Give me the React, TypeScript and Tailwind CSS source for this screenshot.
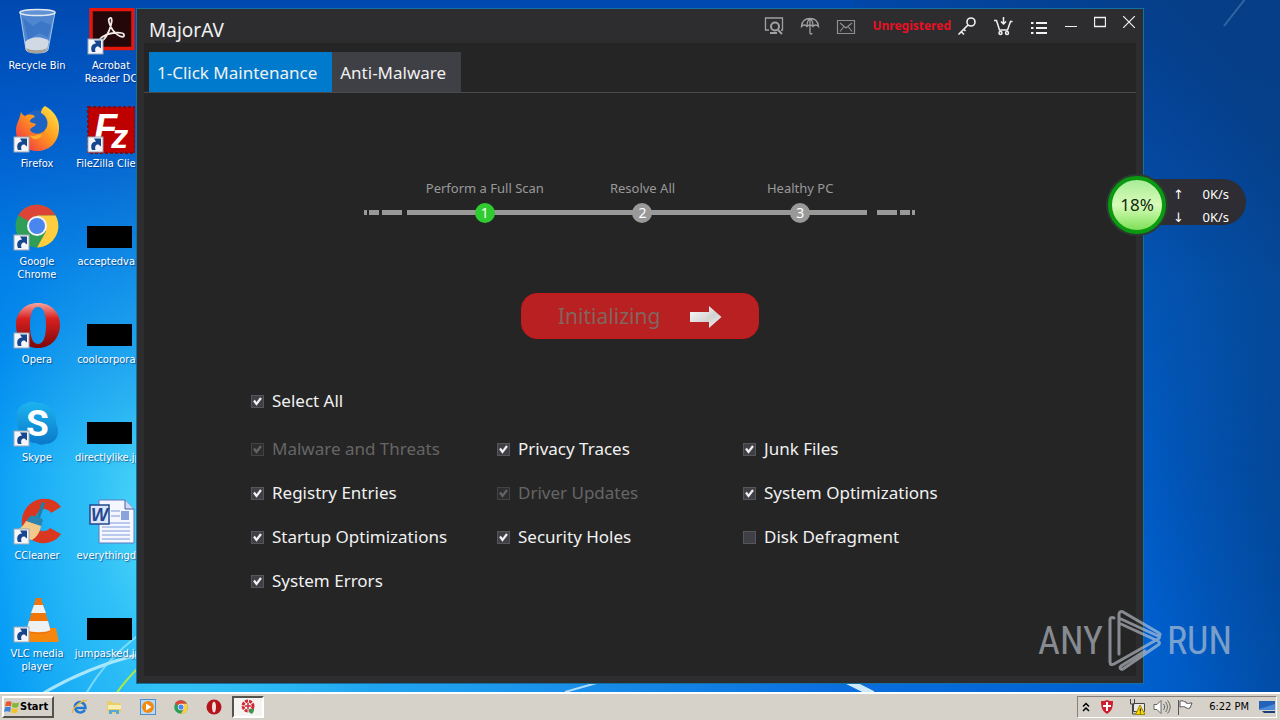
import { useState } from 'react'
import type { ReactNode } from 'react'

function Shortcut() {
  return (
    <g>
      <rect x="1" y="31" width="15" height="15" fill="#f4f6fa" stroke="#9aa7b8" />
      <path d="M5 44c-2-5 0-8 4-8.500l-2-3h7v8l-2.500-2c-3 0-4 2-3 5.500z" fill="#17468f" />
    </g>
  )
}

function RecycleBin() {
  return (
    <svg viewBox="0 0 48 48" className="size-12">
      <path d="M7 4l6 38c1 4 21 4 22 0l7-38z" fill="#8fb7e6" fillOpacity=".55" stroke="#a9c6e8" />
      <path d="M10 10l10 8 8-5 10 4-3 12-9-4-11 7z" fill="#2a66bd" fillOpacity=".5" />
      <path d="M12 34c6-6 17-6 24-1l-2 9c-2 3-19 3-21 0z" fill="#dfe3e6" fillOpacity=".9" />
      <path d="M13 40c5 3 16 3 21 0l-1 3c-3 3-17 3-19 0z" fill="#a7a198" />
      <ellipse cx="24.500" cy="4.500" rx="17.500" ry="3" fill="#5f93d6" stroke="#e1e8ee" strokeWidth="1.500" />
    </svg>
  )
}

function Acrobat() {
  return (
    <svg viewBox="0 0 48 48" className="size-12">
      <rect x="4" y="1.500" width="42" height="39" fill="#240709" stroke="#e5170d" strokeWidth="3.500" />
      <path d="M22 11c2-3 4 0 2 6-2 8-7 16-10 16-4-1 3-7 12-8 7-1 12 0 11 3-2 3-11-3-14-11-1-3-2-5-1-6z" fill="none" stroke="#f3e9e6" strokeWidth="1.800" />
      <Shortcut />
    </svg>
  )
}

function Firefox() {
  return (
    <svg viewBox="0 0 48 48" className="size-12">
      <defs>
        <linearGradient id="fox" x1="1" y1="0" x2="0" y2="1">
          <stop offset="0" stopColor="#fff04a" />
          <stop offset=".45" stopColor="#ff9a1f" />
          <stop offset="1" stopColor="#f0204b" />
        </linearGradient>
      </defs>
      <circle cx="25" cy="20" r="16" fill="#1c63c4" />
      <path d="M8 6c1 2 2 3 4 4 4-2 8-2 10 1-4 1-5 3-5 5l6 2c-1 3-5 3-6 6 3 5 11 5 15 0 5-6 2-14-4-17 0-3 1-5 4-7 9 5 15 13 14 24-1 13-10 21-22 21S3 36 3 25c0-8 3-9 5-19z" fill="url(#fox)" />
      <path d="M16 29c5 3 9-2 13 0-2 5-9 6-13 0z" fill="#ffb02a" />
      <Shortcut />
    </svg>
  )
}

function FileZilla() {
  return (
    <svg viewBox="0 0 48 48" className="size-12">
      <rect x="1" y="1" width="47" height="46" fill="#bf0000" stroke="#7c1016" strokeWidth="2" strokeDasharray="3 2" />
      <text x="7" y="35" fontFamily="Liberation Sans" fontWeight="bold" fontStyle="italic" fontSize="38" fill="#fff">
        F<tspan dx="-6" dy="7" fontSize="34">z</tspan>
      </text>
      <Shortcut />
    </svg>
  )
}

function ChromeLogo({ className }: { className: string }) {
  return (
    <svg viewBox="2 2 44 44" className={className}>
      <circle cx="24" cy="24" r="21.500" fill="#2f9e58" />
      <path d="M24 24L5.400 13.200A21.500 21.500 0 0 1 42.600 13.500H24z" fill="#db4437" />
      <path d="M24 13.500h18.600A21.500 21.500 0 0 1 24 45.500l9-16z" fill="#ffcd40" />
      <circle cx="24" cy="24" r="10" fill="#f4f4f4" />
      <circle cx="24" cy="24" r="8" fill="#4a86ee" />
    </svg>
  )
}

function Chrome() {
  return (
    <div className="relative flex size-12 justify-center">
      <ChromeLogo className="size-11" />
      <svg viewBox="0 0 48 48" className="absolute inset-0"><Shortcut /></svg>
    </div>
  )
}

function Opera() {
  return (
    <svg viewBox="0 0 48 48" className="size-12">
      <defs>
        <linearGradient id="opera" x1="0" y1="0" x2="0" y2="1">
          <stop offset="0" stopColor="#f5a5a0" />
          <stop offset=".35" stopColor="#d9201f" />
          <stop offset="1" stopColor="#7d0709" />
        </linearGradient>
      </defs>
      <path fillRule="evenodd" d="M25 1C12 1 3 10 3 23s9 23 22 23 22-10 22-23S38 1 25 1zm0 4c6 0 8 8 8 18s-2 19-8 19-8-9-8-19 2-18 8-18z" fill="url(#opera)" />
      <Shortcut />
    </svg>
  )
}

function Skype() {
  return (
    <svg viewBox="0 0 48 48" className="size-12">
      <defs>
        <linearGradient id="skype" x1="0" y1="0" x2="0" y2="1">
          <stop offset="0" stopColor="#1cb4f0" />
          <stop offset="1" stopColor="#0a78c8" />
        </linearGradient>
      </defs>
      <path d="M14 3c4-2 8-1 10 0 11-1 20 9 19 21 5 8 1 20-11 20-3 1-6 1-9-1C12 43 4 34 5 23 1 15 5 5 14 3z" fill="url(#skype)" />
      <text x="13" y="36" fontFamily="Roboto" fontWeight="bold" fontSize="37" fill="#fff">S</text>
      <Shortcut />
    </svg>
  )
}

function CCleaner() {
  return (
    <svg viewBox="0 0 48 48" className="size-12">
      <path d="M48 9C42-1 26-2 17 6 6 15 6 34 17 41c10 7 25 5 31-5l-11-6c-4 5-12 4-14-2-3-7 1-16 8-17 3 0 5 1 7 4z" fill="#d9371f" />
      <path d="M29 4l3 1-6 18h-4z" fill="#1e7fa8" />
      <path d="M17 18c5-1 10 1 13 4l-2 6-15-5z" fill="#2a84ad" />
      <path d="M13 23l15 5c-1 6-4 11-9 14-5-1-12-4-17-9 5-2 8-5 11-10z" fill="#f3c98a" />
      <Shortcut />
    </svg>
  )
}

function WordDoc() {
  return (
    <svg viewBox="0 0 48 48" className="size-12">
      <path d="M12 2h26l9 9v34H12z" fill="#f4f7ff" stroke="#5f79bd" />
      <path d="M38 2v9h9" fill="#cfdaf2" stroke="#3f5fae" />
      <path d="M24 13h9M24 18h9M15 25h28M15 29h28M15 33h28M15 37h28M15 41h28" stroke="#7f98d8" />
      <rect x="34" y="13" width="8" height="9" fill="#8ba3dd" />
      <rect x="3" y="7" width="19" height="19" fill="#dce6fa" stroke="#24478f" strokeWidth="1.500" />
      <text x="4" y="23" fontFamily="Liberation Sans" fontWeight="bold" fontStyle="italic" fontSize="18" fill="#24478f">W</text>
    </svg>
  )
}

function Vlc() {
  return (
    <svg viewBox="0 0 48 48" className="size-12">
      <path d="M10 32h33l3 14H6z" fill="#f5870f" />
      <path d="M23 2h5l10 33c-3 4-22 4-25 0z" fill="#f0760a" />
      <path d="M21 9h9l3 8H18zM16 25h19l2.500 9c-5 3-19 3-24 0z" fill="#eef1f2" />
      <Shortcut />
    </svg>
  )
}

function Thumb() {
  return (
    <div className="size-12 flex items-end pb-1">
      <div className="h-[22px] w-[45px] bg-black" />
    </div>
  )
}

const coluna1 = [
  { nome: 'Recycle Bin', icone: <RecycleBin /> },
  { nome: 'Firefox', icone: <Firefox /> },
  { nome: 'Google Chrome', icone: <Chrome /> },
  { nome: 'Opera', icone: <Opera /> },
  { nome: 'Skype', icone: <Skype /> },
  { nome: 'CCleaner', icone: <CCleaner /> },
  { nome: 'VLC media player', icone: <Vlc /> },
]

const coluna2 = [
  { nome: 'Acrobat Reader DC', icone: <Acrobat /> },
  { nome: 'FileZilla\u00a0Client', icone: <FileZilla /> },
  { nome: 'acceptedva...', icone: <Thumb /> },
  { nome: 'coolcorpora...', icone: <Thumb /> },
  { nome: 'directlylike.jpg', icone: <Thumb /> },
  { nome: 'everythingd...', icone: <WordDoc /> },
  { nome: 'jumpasked.jpg', icone: <Thumb /> },
]

function Coluna({ itens }: { itens: { nome: string; icone: ReactNode }[] }) {
  return (
    <ul className="w-[74px] flex flex-col">
      {itens.map((i) => (
        <li key={i.nome} className="h-[98px] flex flex-col items-center gap-[3px]">
          {i.icone}
          <span className="px-1 text-center text-[11px] leading-[13px] text-white [text-shadow:1px_1px_1px_rgba(0,30,90,0.6)]">{i.nome}</span>
        </li>
      ))}
    </ul>
  )
}

function Wallpaper() {
  return (
    <div className="absolute inset-0 bg-[linear-gradient(to_right,#049af5_0%,#22b4f4_12%,#1f9eee_35%,#0b6fe0_65%,#0060d0_89%,#0050ae_100%)]">
      <div className="absolute inset-0 bg-[radial-gradient(ellipse_220px_320px_at_190px_510px,rgba(100,232,248,0.85),rgba(70,212,250,0.5)_45%,transparent)]" />
      <div className="absolute inset-0 bg-[linear-gradient(to_bottom,#0049b0_0%,rgba(0,80,195,0.85)_18%,rgba(0,105,220,0.5)_40%,transparent_68%)]" />
      <div className="absolute inset-y-0 right-0 w-1/3 bg-[linear-gradient(to_top_right,transparent_40%,rgba(8,58,120,0.75)_90%)]" />
      <svg viewBox="0 0 1280 692" preserveAspectRatio="none" className="absolute inset-0 size-full" fill="none">
        <path d="M42 694Q85 668 140 654" stroke="#c9f2fd" strokeWidth="3" opacity=".8" />
        <path d="M86 694Q105 660 140 634" stroke="#9fe8fb" strokeWidth="2" opacity=".7" />
        <path d="M116 694Q124 682 140 666" stroke="#a8e84e" strokeWidth="2" />
        <path d="M565 692l35-10" stroke="#d4f0ff" strokeWidth="2" opacity=".8" />
        <path d="M845 680l28 14" stroke="#e4f5ff" strokeWidth="6" opacity=".9" />
        <path d="M1224 26l36-46" stroke="#6fa0cf" strokeWidth="2" opacity=".4" />
      </svg>
    </div>
  )
}

const opcoes = [
  { nome: 'Malware and Threats', marcado: true, bloqueado: true },
  { nome: 'Privacy Traces', marcado: true },
  { nome: 'Junk Files', marcado: true },
  { nome: 'Registry Entries', marcado: true },
  { nome: 'Driver Updates', marcado: true, bloqueado: true },
  { nome: 'System Optimizations', marcado: true },
  { nome: 'Startup Optimizations', marcado: true },
  { nome: 'Security Holes', marcado: true },
  { nome: 'Disk Defragment', marcado: false },
  { nome: 'System Errors', marcado: true },
]

function Opcao({ nome, marcado, bloqueado = false }: { nome: string; marcado: boolean; bloqueado?: boolean }) {
  const [ativo, setAtivo] = useState(marcado)
  return (
    <label className={`h-11 flex items-center gap-2 text-[17px] leading-6 ${bloqueado ? 'text-[#656565]' : 'text-[#f1f1f1]'}`}>
      <span className="grid size-[13px] shrink-0 place-items-center">
        <input type="checkbox" checked={ativo} disabled={bloqueado} onChange={(e) => setAtivo(e.target.checked)}
          className="col-start-1 row-start-1 size-[13px] appearance-none border border-[#55555a] bg-[#3f3f46] disabled:border-[#434346] disabled:bg-[#2d2d30]" />
        {ativo && (
          <svg viewBox="0 0 13 13" fill="none" className="pointer-events-none col-start-1 row-start-1 size-[13px]">
            <path d="M3 5.500l2.500 3.500L10 3" stroke="currentColor" strokeWidth="2.200" />
          </svg>
        )}
      </span>
      {nome}
    </label>
  )
}

const passos = ['Perform a Full Scan', 'Resolve All', 'Healthy PC']

function Passos() {
  return (
    <div className="relative mx-auto w-[552px]">
      <div className="absolute inset-x-0 bottom-2 flex h-[5px]">
        <div className="w-[3px] bg-[#999]" />
        <div className="ml-0.5 w-2.5 bg-[#999]" />
        <div className="ml-[3px] w-5 bg-[#999]" />
        <div className="ml-[5px] w-[460px] bg-[#999]" />
        <div className="ml-2.5 w-5 bg-[#999]" />
        <div className="ml-[3px] w-2.5 bg-[#999]" />
        <div className="ml-0.5 w-[3px] bg-[#999]" />
      </div>
      <ol className="relative ml-[42px] mr-[37px] grid grid-cols-3">
        {passos.map((p, i) => (
          <li key={p} className="flex flex-col items-center gap-[5px] text-[13px] leading-5 text-[#999]">
            {p}
            <span className={`size-5 rounded-full text-center text-sm leading-5 text-white ${i === 0 ? 'bg-[#2ecc2e]' : 'bg-[#999]'}`}>{i + 1}</span>
          </li>
        ))}
      </ol>
    </div>
  )
}

function BarraTitulo() {
  return (
    <header className="h-[34px] shrink-0 flex items-start justify-between pl-3 pr-2">
      <h1 className="pt-[7px] text-[19px] leading-7 text-[#f1f1f1]">MajorAV</h1>
      <div className="flex h-[33px] items-center gap-4 text-[#f1f1f1]">
        <button aria-label="Scan" className="text-[#a0a0a0]">
          <svg viewBox="0 0 20 20" className="size-5" fill="none" stroke="currentColor" strokeWidth="1.300">
            <path d="M5 14H1.500V2h17v12H17" />
            <circle cx="11" cy="10.500" r="4" strokeWidth="2" />
            <path d="M6 17h7M14 14l4 4" strokeWidth="2" />
          </svg>
        </button>
        <button aria-label="Protection" className="text-[#a0a0a0]">
          <svg viewBox="0 0 20 20" className="size-5" fill="none" stroke="currentColor" strokeWidth="1.300">
            <path d="M1.500 10.500C2 5 5.500 2.500 10 2.500s8 2.500 8.500 8c-2-2-4-2-5.500 0-1.500-2-4.500-2-6 0-1.500-2-3.500-2-5.500 0zM7 10C7 7 8 4 10 2.500M13 10c0-3-1-6-3-7.500M10 2v15c0 1.500 2 1.500 2 0" />
          </svg>
        </button>
        <button aria-label="Mail" className="text-[#8f8f8f]">
          <svg viewBox="0 0 20 20" className="size-5" fill="none" stroke="currentColor" strokeWidth="1.200">
            <path d="M1.500 4.500h17v13h-17zM4 7l6 5 6-5M4 15.500l4-5M16 15.500l-4-5" />
          </svg>
        </button>
        <a href="#register" className="text-xs font-bold text-[#e81123]">Unregistered</a>
        <button aria-label="Enter key" className="-ml-2.5">
          <svg viewBox="0 0 20 20" className="size-5" fill="none" stroke="currentColor" strokeWidth="1.600">
            <circle cx="14" cy="6" r="4" />
            <path d="M11 9l-9.500 9.500M4 15.500l3 3M6.500 13l2 2" />
          </svg>
        </button>
        <button aria-label="Buy">
          <svg viewBox="0 0 20 20" className="size-5" fill="none" stroke="currentColor" strokeWidth="1.500">
            <path d="M1 4.500h2.500L6.500 14h8l3-8.500h2M10.500 1v7M8 5.500L10.500 8 13 5.500" />
            <circle cx="7.500" cy="17" r="1.500" />
            <circle cx="14" cy="17" r="1.500" />
          </svg>
        </button>
        <button aria-label="Menu">
          <svg viewBox="0 0 20 20" className="size-5" fill="none" stroke="currentColor" strokeWidth="2">
            <path d="M2 7h2.500M2 12h2.500M2 17h2.500M7 7h11M7 12h11M7 17h11" />
          </svg>
        </button>
        <div className="flex gap-[17px] pb-2">
          <button aria-label="Minimize">
            <svg viewBox="0 0 12 12" className="size-3"><path d="M0 10.500h12" stroke="currentColor" /></svg>
          </button>
          <button aria-label="Maximize">
            <svg viewBox="0 0 12 12" className="size-3" fill="none"><path d="M.5 1.500h11v9H.5z" stroke="currentColor" strokeWidth="1.300" /></svg>
          </button>
          <button aria-label="Close">
            <svg viewBox="0 0 12 12" className="size-3"><path d="M0 0l12 12M12 0L0 12" stroke="currentColor" strokeWidth="1.200" /></svg>
          </button>
        </div>
      </div>
    </header>
  )
}

function JanelaAntivirus() {
  return (
    <section className="absolute inset-x-[136px] top-2 bottom-2 flex flex-col border border-[#14719f] bg-[#2d2d30] font-['Noto_Sans','Open_Sans',sans-serif]">
      <BarraTitulo />
      <div className="mx-[7px] mb-[7px] flex-1 bg-[#252526]">
        <nav className="flex items-end border-b border-[#4a4a4d] pl-[5px] pt-[9px] text-[17px] leading-6 text-[#f1f1f1]">
          <button className="h-10 bg-[#007acc] pl-2 pr-[15px] pt-0.5">1-Click Maintenance</button>
          <button className="h-10 bg-[#3f3f46] pl-2 pr-[15px] pt-0.5">Anti-Malware</button>
        </nav>
        <div className="pt-[85px]">
          <Passos />
          <button disabled className="mx-auto mt-[70px] flex h-[46px] w-[238px] items-center justify-between rounded-2xl border border-[#c4181b] bg-[#b92022] px-9 pt-0.5 text-[21px] text-[#80665f]">
            Initializing
            <svg viewBox="0 0 32 24" className="h-6 w-8">
              <defs>
                <linearGradient id="seta" x1="0" y1="0" x2="1" y2="1">
                  <stop offset="0" stopColor="#fff" />
                  <stop offset=".6" stopColor="#d2d2d2" />
                  <stop offset="1" stopColor="#f5f5f5" />
                </linearGradient>
              </defs>
              <path d="M0 7h19V1l12.500 11L19 23v-6H0z" fill="url(#seta)" />
            </svg>
          </button>
          <div className="mx-[107px] mt-10">
            <Opcao nome="Select All" marcado />
            <div className="mt-1 grid max-w-[738px] grid-cols-3">
              {opcoes.map((o) => <Opcao key={o.nome} {...o} />)}
            </div>
          </div>
        </div>
      </div>
    </section>
  )
}

function MedidorRede() {
  return (
    <aside className="absolute right-[34px] top-[176px] flex items-center font-['Noto_Sans','Open_Sans',sans-serif]">
      <div className="z-10 flex size-[58px] items-center justify-center rounded-full border-4 border-[#0a9a12] bg-[linear-gradient(#a8ec98,#d8fbb8_50%,#7ee058)] text-[17px] text-[#102810] shadow-[0_0_0_2px_#2d3a30]">
        18%
      </div>
      <dl className="-ml-9 -mt-1.5 grid h-[46px] w-[116px] grid-cols-[20px_1fr] content-start rounded-r-full bg-[#2d2d33] pl-[43px] pr-[17px] pt-1 text-[13px] leading-[23px] text-white">
        <dt className="font-['DejaVu_Sans']">↑</dt>
        <dd className="text-right">0K/s</dd>
        <dt className="font-['DejaVu_Sans']">↓</dt>
        <dd className="text-right">0K/s</dd>
      </dl>
    </aside>
  )
}

function MarcaDagua() {
  return (
    <div className="absolute bottom-5 right-12 flex items-center gap-1 font-['Roboto_Condensed','Liberation_Sans_Narrow','Liberation_Sans',sans-serif] text-[38px] leading-none text-[#c9d0d8] opacity-60">
      <span>ANY</span>
      <svg viewBox="0 0 56 62" className="h-[62px] w-14" fill="none" stroke="currentColor" strokeWidth="3" strokeLinejoin="round" strokeLinecap="round">
        <path d="M7 8c-3-1-4 0-4 2v42c0 3 2 3 4 2l44-25c2-1 2-3 0-4" />
        <path d="M12 44V4c0-2 2-3 4-2l36 21c2 1 1 3-1 3L14 9" />
        <path d="M14 14l37 17c2 1 2 3 0 4L16 59c-2 1-4-1-2-3l24-15" />
      </svg>
      <span>RUN</span>
    </div>
  )
}

function Escudo() {
  return (
    <svg viewBox="0 0 16 16" className="size-4">
      <path d="M8 1c2 1 4 1 6 1 0 6-1 10-6 13C3 12 2 8 2 2c2 0 4 0 6-1z" fill="#cf1f2e" />
      <path d="M8 3v9M4 7h8" stroke="#fff" strokeWidth="2" />
    </svg>
  )
}

function BarraTarefas() {
  return (
    <footer className="flex h-7 shrink-0 items-center justify-between border-t-2 border-white bg-[#d6d2ca] pl-0.5 pr-[3px] text-[11px] text-black">
      <div className="flex items-center">
        <button className="flex h-[22px] w-[52px] items-center border-2 border-t-white border-l-white border-r-[#55524c] border-b-[#55524c] text-[11px] font-bold">
          <svg viewBox="0 0 16 16" className="size-4 shrink-0">
            <path d="M2 3c2-1 4-1 5.500 0L7 7.500C5 6.500 3 6.500 1 7.500z" fill="#e8562b" />
            <path d="M8.500 3.500c2 1 4 1 6.500 0L14 8c-2 1-4 1-6 0z" fill="#7fb83a" />
            <path d="M1 8.500c2-1 4-1 6 0L6 13c-2-1-4-1-6 0z" fill="#3f83d8" />
            <path d="M8 9c2 1 4 1 6 0l-1 4.500c-2 1-4 1-6 0z" fill="#f4c22b" />
          </svg>
          Start
        </button>
        <nav className="ml-[18px] flex items-center gap-[18px]">
          <button aria-label="Internet Explorer">
            <svg viewBox="0 0 16 16" className="size-4" fill="none">
              <path d="M13 11c-3 4-9 3-10-2s5-8 9-4c1 1 1.500 2.500 1.500 4H4" stroke="#2277d2" strokeWidth="2.500" />
              <path d="M1 14C-1 11 8 1 15 1.500" stroke="#e9b93a" strokeWidth="1.300" />
            </svg>
          </button>
          <button aria-label="Windows Explorer">
            <svg viewBox="0 0 16 16" className="size-4">
              <path d="M1 2h5l1 2h8v10H1z" fill="#e9cf6c" />
              <path d="M2 6h13v4H2z" fill="#f9edb0" />
              <path d="M3 15v-4h10v4h-3v-2H6v2z" fill="#57a8dd" />
            </svg>
          </button>
          <button aria-label="Media Player">
            <svg viewBox="0 0 16 16" className="size-4">
              <rect x=".5" y=".5" width="15" height="15" fill="#b9daf5" stroke="#4a8fd0" />
              <circle cx="8" cy="8" r="6" fill="#f28a12" />
              <path d="M6 4.500v7L11.500 8z" fill="#fff" />
            </svg>
          </button>
          <button aria-label="Chrome"><ChromeLogo className="size-[14px]" /></button>
          <button aria-label="Opera">
            <svg viewBox="0 0 16 16" className="size-4">
              <circle cx="8" cy="8" r="7.500" fill="#b3141a" />
              <ellipse cx="8" cy="8" rx="2" ry="5.500" fill="#f5dedc" />
            </svg>
          </button>
        </nav>
        <button aria-label="MajorAV" className="ml-2.5 flex h-[22px] w-8 items-center justify-center border-2 border-t-[#55524c] border-l-[#55524c] border-r-white border-b-white bg-[#f6f4f2]">
          <svg viewBox="0 0 16 16" className="size-4" fill="none">
            <circle cx="8" cy="7" r="5" stroke="#cf2a3a" strokeWidth="3" strokeDasharray="3 1" />
            <path d="M8 4v6M5 7h6" stroke="#cf2a3a" strokeWidth="1.500" />
            <path d="M9 10h5c0 3-1 4-2.500 5C10 14 9 13 9 10z" fill="#3c9650" />
          </svg>
        </button>
      </div>
      <div className="flex h-[22px] items-center border border-t-[#85817a] border-l-[#85817a] border-r-white border-b-white pl-1 pr-px">
        <button aria-label="Show hidden icons">
          <svg viewBox="0 0 8 10" className="h-2.5 w-2" fill="none" stroke="#000" strokeWidth="1.500"><path d="M1 4.500L4 1.500l3 3M1 9l3-3 3 3" /></svg>
        </button>
        <span className="ml-[9px]"><Escudo /></span>
        <svg viewBox="0 0 16 16" className="ml-[14px] size-4" fill="none" stroke="#444">
          <path d="M4.500 4.500h11v8h-11z" fill="#e9e9e9" />
          <path d="M1.500 0v5h4V0M3.500 5v10h5" />
          <path d="M11 6l5 9.500H6.500z" fill="#ffd800" stroke="#9c8500" />
          <path d="M11.300 9.500v3M11.300 13.500v1" stroke="#000" />
        </svg>
        <svg viewBox="0 0 18 16" className="ml-2 h-4 w-[18px]" fill="none" stroke="#666">
          <path d="M1 5.500h3l4-4v13l-4-4H1z" fill="#fff" />
          <path d="M10.500 5c1.500 2 1.500 4 0 6M12.500 3c2.500 3 2.500 7 0 10M14.500 1.500c3.500 4 3.500 9 0 13" />
        </svg>
        <svg viewBox="0 0 16 16" className="ml-1.5 size-4" fill="none" stroke="#555">
          <path d="M1.500 1v15M3 2c3-1 4 1 6 1v1c2 1 3 0 6 0-1 2-1 3-2 5-2 1-4 0-5-1-2-1-3 0-5 0z" fill="#fff" />
        </svg>
        <time className="ml-4 text-[11px]">6:22 PM</time>
        <button aria-label="Show desktop" className="ml-2.5">
          <svg viewBox="0 0 16 16" className="size-4"><path d="M0 2h16v9H0z" fill="#2462b8" /><path d="M0 10L16 5v6H0z" fill="#4b8ad9" /><path d="M3 12h13v2H5z" fill="#183f7a" /></svg>
        </button>
      </div>
    </footer>
  )
}

export default function App() {
  return (
    <div className="flex h-screen flex-col overflow-hidden font-['DejaVu_Sans_Condensed','DejaVu_Sans',sans-serif]">
      <main className="relative min-h-0 flex-1">
        <Wallpaper />
        <div className="relative flex pt-2">
          <Coluna itens={coluna1} />
          <Coluna itens={coluna2} />
        </div>
        <JanelaAntivirus />
        <MedidorRede />
        <MarcaDagua />
      </main>
      <BarraTarefas />
    </div>
  )
}
